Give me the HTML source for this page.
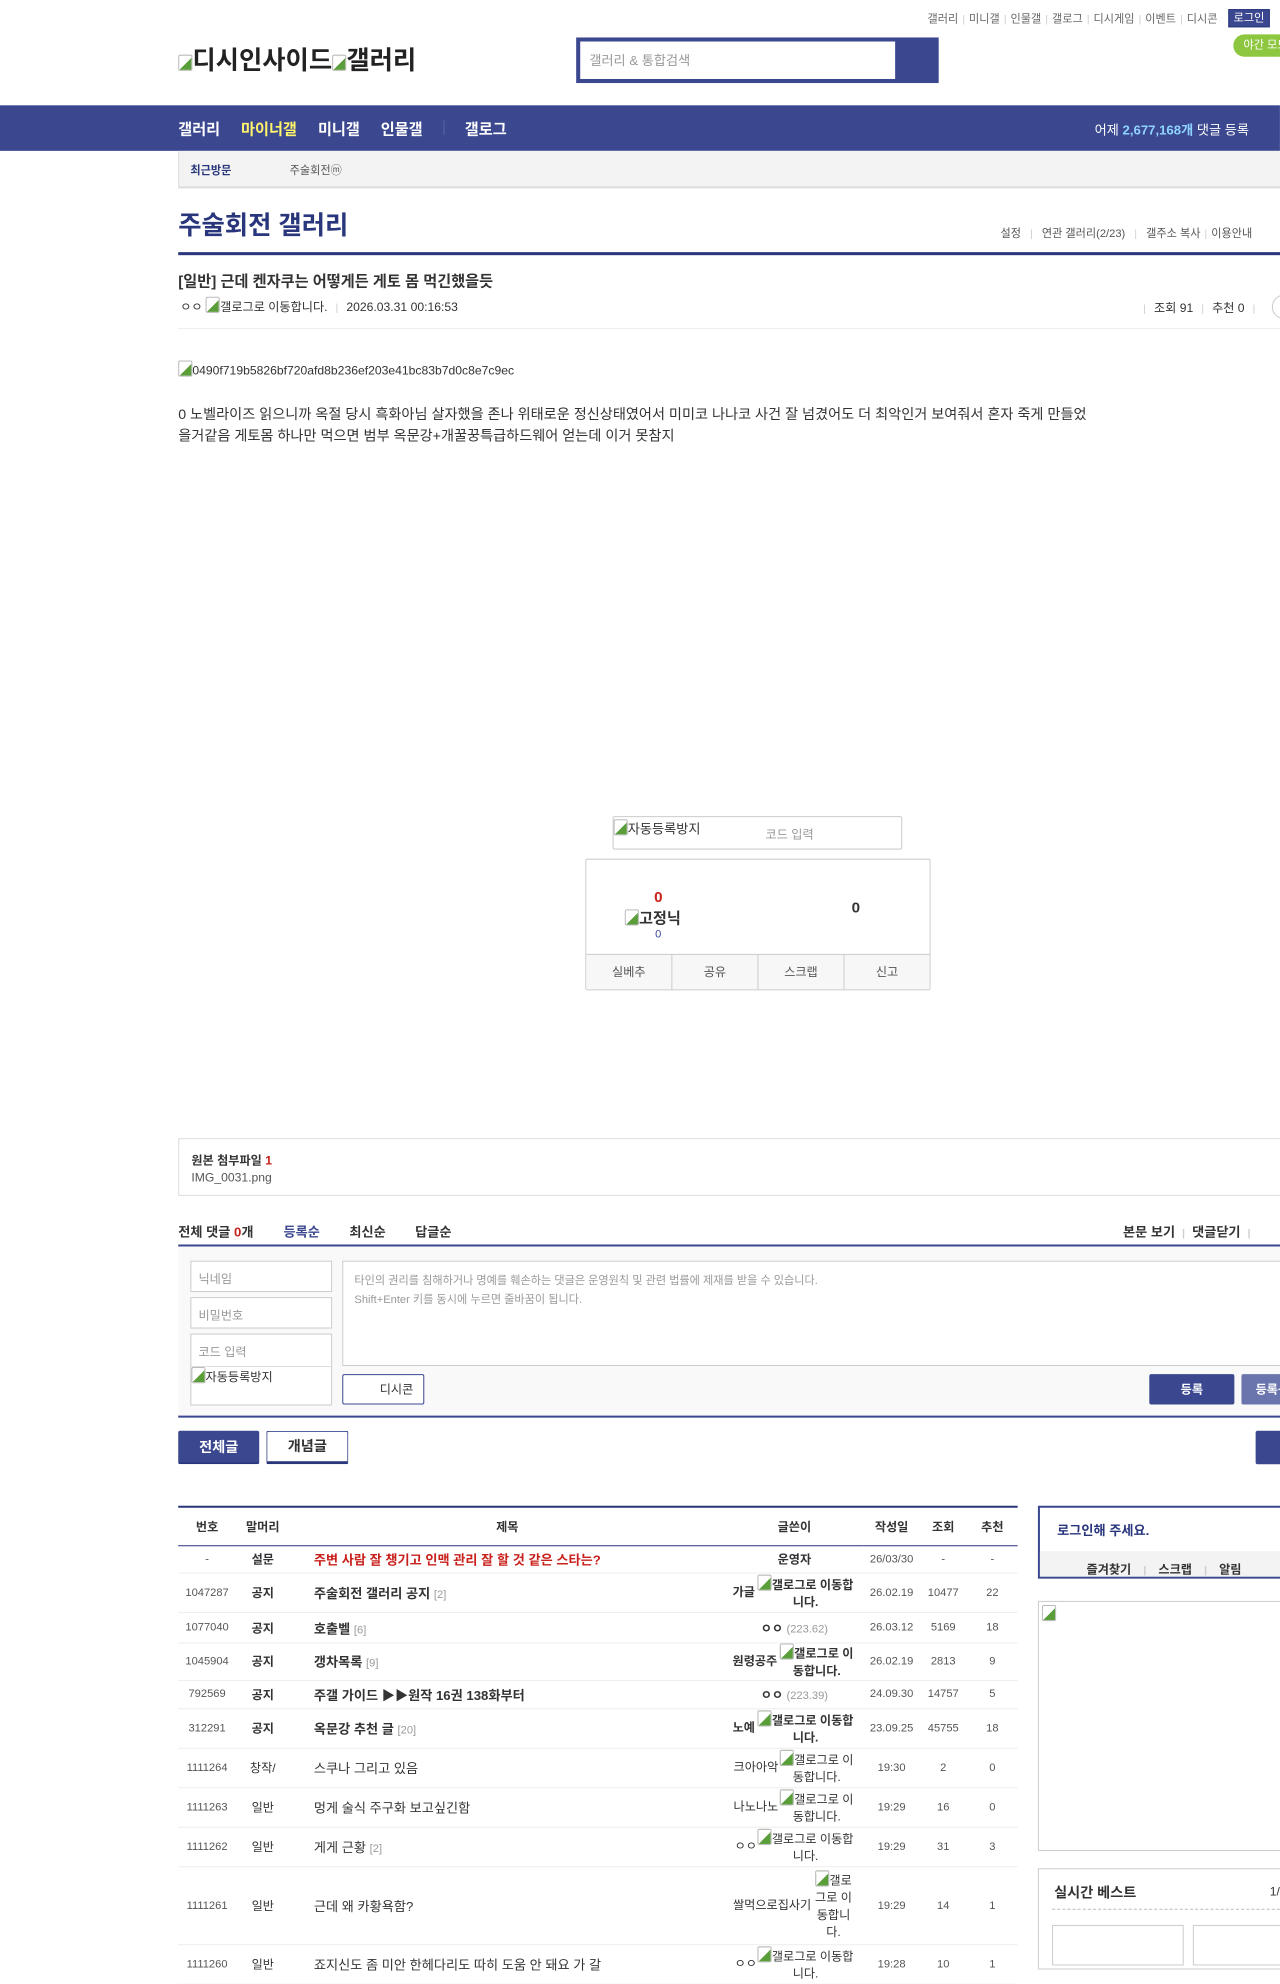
<!DOCTYPE html>
<html><head><meta charset="utf-8">
<style>
*{margin:0;padding:0;box-sizing:border-box}
body{width:1280px;height:1957px;overflow:hidden;background:#fff;font-family:"Liberation Sans","Noto Sans CJK KR",sans-serif;color:#333;font-size:13px}
#w{position:relative;width:1264px;height:1933px;transform:scale(1.0126);transform-origin:0 0}
.a{position:absolute;white-space:nowrap}
.bi{display:inline-block;width:14px;height:16px;border:1px solid #bbb;border-radius:2px;vertical-align:-2px;background:linear-gradient(135deg,#fff 55%,#5a9e3a 55%)}
.sep{color:#ccc;margin:0 4px;font-size:10px}
.nav{color:#fff;font-size:15px;font-weight:bold}
table{border-collapse:collapse;width:829px;font-size:12px;table-layout:fixed}
td{border-bottom:1px solid #eee;text-align:center;color:#333}
td.t{text-align:left;padding-left:24px;font-size:13px;white-space:nowrap;overflow:hidden}
td.n{font-size:11px;color:#555}
td.w{white-space:normal}
.g{display:inline-block;width:100px;white-space:normal;line-height:17px;vertical-align:middle;text-align:center}
.cm{color:#999;font-size:11px}
</style></head><body><div id="w">

<div class="a" style="left:916px;top:10px;font-size:11px;color:#666">갤러리<span class="sep">|</span>미니갤<span class="sep">|</span>인물갤<span class="sep">|</span>갤로그<span class="sep">|</span>디시게임<span class="sep">|</span>이벤트<span class="sep">|</span>디시콘</div>
<div class="a" style="left:1213px;top:9px;width:41px;height:18px;background:#3b4890;border:1px solid #29367c;color:#fff;font-size:11px;text-align:center;line-height:16px">로그인</div>
<div class="a" style="left:1218px;top:34px;width:60px;height:22px;background:#8dc63f;border-radius:11px;color:#fff;font-size:11px;line-height:22px;padding-left:10px">야간 모드</div>

<div class="a" style="left:176px;top:40px;font-size:25px;font-weight:bold;color:#222"><span class="bi"></span>디시인사이드<span class="bi"></span>갤러리</div>

<div class="a" style="left:569px;top:37px;width:358px;height:45px;background:#3b4890"></div>
<div class="a" style="left:573px;top:41px;width:311px;height:37px;background:#fff;color:#999;font-size:13px;line-height:37px;padding-left:9px">갤러리 &amp; 통합검색</div>

<div class="a" style="left:0;top:104px;width:1264px;height:45px;background:#3b4890"></div>
<div class="a nav" style="left:176px;top:117px">갤러리</div>
<div class="a nav" style="left:238px;top:117px;color:#fff46a">마이너갤</div>
<div class="a nav" style="left:314px;top:117px">미니갤</div>
<div class="a nav" style="left:376px;top:117px">인물갤</div>
<div class="a" style="left:438px;top:119px;width:1px;height:14px;background:#5b67a5"></div>
<div class="a nav" style="left:459px;top:117px">갤로그</div>
<div class="a" style="left:1081px;top:118px;color:#fff;font-size:13px">어제 <b style="color:#8fd3ff">2,677,168개</b> 댓글 등록</div>

<div class="a" style="left:176px;top:149px;width:1090px;height:37px;background:#f3f3f3;border-bottom:2px solid #ddd;border-left:1px solid #ddd"></div>
<div class="a" style="left:188px;top:160px;font-size:11px;font-weight:bold;color:#29367c">최근방문</div>
<div class="a" style="left:286px;top:160px;font-size:11px;color:#555">주술회전ⓜ</div>

<div class="a" style="left:176px;top:203px;font-size:25px;font-weight:bold;color:#29367c">주술회전 갤러리</div>
<div class="a" style="left:988px;top:222px;font-size:11px;color:#555">설정<span class="sep" style="margin:0 9px">|</span>연관 갤러리(2/23)<span class="sep" style="margin:0 9px">|</span>갤주소 복사<span class="sep">|</span>이용안내</div>
<div class="a" style="left:176px;top:249px;width:1090px;height:3px;background:#29367c"></div>

<div class="a" style="left:176px;top:267px;font-size:15px;font-weight:bold;color:#333">[일반] 근데 켄자쿠는 어떻게든 게토 몸 먹긴했을듯</div>
<div class="a" style="left:178px;top:293px;font-size:12px;color:#333">ㅇㅇ <span class="bi"></span>갤로그로 이동합니다.<span class="sep" style="margin:0 8px">|</span>2026.03.31 00:16:53</div>
<div class="a" style="left:1121px;top:295px;font-size:12px;color:#333"><span class="sep" style="margin:0 8px">|</span>조회 91<span class="sep" style="margin:0 8px">|</span>추천 0<span class="sep" style="margin:0 8px">|</span></div>
<div class="a" style="left:1256px;top:291px;width:24px;height:24px;border:1px solid #ccc;border-radius:12px"></div>
<div class="a" style="left:176px;top:324px;width:1090px;height:1px;background:#eee"></div>

<div class="a" style="left:176px;top:356px;font-size:12px;color:#333"><span class="bi"></span>0490f719b5826bf720afd8b236ef203e41bc83b7d0c8e7c9ec</div>
<div class="a" style="left:176px;top:399px;font-size:14px;line-height:21px;color:#333">0 노벨라이즈 읽으니까 옥절 당시 흑화아님 살자했을 존나 위태로운 정신상태였어서 미미코 나나코 사건 잘 넘겼어도 더 최악인거 보여줘서 혼자 죽게 만들었<br>을거같음 게토몸 하나만 먹으면 범부 옥문강+개꿀꿍특급하드웨어 얻는데 이거 못참지</div>

<div class="a" style="left:605px;top:806px;width:286px;height:33px;border:1px solid #ccc;border-radius:2px"></div>
<div class="a" style="left:606px;top:808px;font-size:13px;color:#333"><span class="bi"></span>자동등록방지</div>
<div class="a" style="left:756px;top:815px;font-size:12px;color:#999">코드 입력</div>

<div class="a" style="left:578px;top:848px;width:341px;height:130px;border:1px solid #ccc;border-radius:2px"></div>
<div class="a" style="left:646px;top:878px;font-size:15px;font-weight:bold;color:#c8201b">0</div>
<div class="a" style="left:617px;top:896px;font-size:15px;font-weight:bold;color:#333"><span class="bi"></span>고정닉</div>
<div class="a" style="left:647px;top:917px;font-size:11px;color:#3b4890">0</div>
<div class="a" style="left:841px;top:888px;font-size:15px;font-weight:bold;color:#333">0</div>
<div class="a" style="left:579px;top:942px;width:339px;height:35px;border-top:1px solid #ccc;background:#f7f7f7;display:flex;font-size:12px;color:#555">
<div style="flex:1;border-right:1px solid #ccc;text-align:center;line-height:34px">실베추</div>
<div style="flex:1;border-right:1px solid #ccc;text-align:center;line-height:34px">공유</div>
<div style="flex:1;border-right:1px solid #ccc;text-align:center;line-height:34px">스크랩</div>
<div style="flex:1;text-align:center;line-height:34px">신고</div></div>

<div class="a" style="left:176px;top:1124px;width:1090px;height:57px;border:1px solid #ddd"></div>
<div class="a" style="left:189px;top:1137px;font-size:12px;font-weight:bold;color:#333">원본 첨부파일 <span style="color:#c8201b">1</span></div>
<div class="a" style="left:189px;top:1156px;font-size:12px;color:#555">IMG_0031.png</div>

<div class="a" style="left:176px;top:1206px;font-size:13px;font-weight:bold;color:#333">전체 댓글 <span style="color:#c8201b">0</span>개</div>
<div class="a" style="left:280px;top:1206px;font-size:13px;font-weight:bold;color:#3b4890">등록순</div>
<div class="a" style="left:345px;top:1206px;font-size:13px;font-weight:bold;color:#333">최신순</div>
<div class="a" style="left:410px;top:1206px;font-size:13px;font-weight:bold;color:#333">답글순</div>
<div class="a" style="left:1109px;top:1206px;font-size:13px;font-weight:bold;color:#333">본문 보기<span class="sep" style="margin:0 7px">|</span>댓글닫기<span class="sep" style="margin:0 7px">|</span></div>
<div class="a" style="left:176px;top:1229px;width:1090px;height:2px;background:#3b4890"></div>
<div class="a" style="left:176px;top:1231px;width:1090px;height:168px;background:#f9f9f9"></div>
<div class="a" style="left:188px;top:1245px;width:140px;height:31px;border:1px solid #ccc;background:#fff;font-size:12px;color:#999;padding:8px 7px">닉네임</div>
<div class="a" style="left:188px;top:1281px;width:140px;height:31px;border:1px solid #ccc;background:#fff;font-size:12px;color:#999;padding:8px 7px">비밀번호</div>
<div class="a" style="left:188px;top:1317px;width:140px;height:71px;border:1px solid #ccc;background:#fff;font-size:12px;color:#999;padding:8px 7px">코드 입력</div>
<div class="a" style="left:188px;top:1349px;width:140px;height:1px;background:#ddd"></div>
<div class="a" style="left:189px;top:1350px;font-size:12px;color:#333"><span class="bi"></span>자동등록방지</div>
<div class="a" style="left:338px;top:1245px;width:930px;height:104px;border:1px solid #ccc;background:#fff;font-size:11px;color:#999;line-height:19px;padding:10px 11px">타인의 권리를 침해하거나 명예를 훼손하는 댓글은 운영원칙 및 관련 법률에 제재를 받을 수 있습니다.<br>Shift+Enter 키를 동시에 누르면 줄바꿈이 됩니다.</div>
<div class="a" style="left:338px;top:1357px;width:81px;height:30px;border:1px solid #3b4890;border-radius:2px;background:#fff;font-size:12px;color:#333;line-height:28px;padding-left:36px">디시콘</div>
<div class="a" style="left:1135px;top:1357px;width:84px;height:30px;background:#3b4890;border-radius:2px;color:#fff;font-size:12px;font-weight:bold;text-align:center;line-height:30px">등록</div>
<div class="a" style="left:1226px;top:1357px;width:60px;height:30px;background:#6b75ad;border-radius:2px;color:#fff;font-size:12px;font-weight:bold;line-height:30px;padding-left:14px">등록+추천</div>
<div class="a" style="left:176px;top:1398px;width:1090px;height:2px;background:#3b4890"></div>

<div class="a" style="left:176px;top:1413px;width:80px;height:33px;background:#3b4890;border-bottom:2px solid #29367c;border-radius:2px;color:#fff;font-size:14px;font-weight:bold;text-align:center;line-height:32px">전체글</div>
<div class="a" style="left:263px;top:1413px;width:81px;height:33px;border:1px solid #3b4890;border-bottom:3px solid #29367c;border-radius:2px;color:#333;font-size:14px;font-weight:bold;text-align:center;line-height:29px">개념글</div>
<div class="a" style="left:1240px;top:1413px;width:60px;height:33px;background:#3b4890;border-radius:2px"></div>

<div class="a" style="left:176px;top:1487px;width:829px;height:2px;background:#29367c"></div>
<div class="a" style="left:176px;top:1489px">
<table>
<colgroup><col style="width:57px"><col style="width:53px"><col style="width:430px"><col style="width:137px"><col style="width:55px"><col style="width:47px"><col style="width:50px"></colgroup>
<tr style="height:37px"><td style="font-weight:bold;border-bottom:1px solid #29367c">번호</td><td style="font-weight:bold;border-bottom:1px solid #29367c">말머리</td><td style="font-weight:bold;border-bottom:1px solid #29367c">제목</td><td style="font-weight:bold;border-bottom:1px solid #29367c">글쓴이</td><td style="font-weight:bold;border-bottom:1px solid #29367c">작성일</td><td style="font-weight:bold;border-bottom:1px solid #29367c">조회</td><td style="font-weight:bold;border-bottom:1px solid #29367c">추천</td></tr>
<tr style="height:27px"><td class="n">-</td><td><b>설문</b></td><td class="t"><b style="color:#c8201b">주변 사람 잘 챙기고 인맥 관리 잘 할 것 같은 스타는?</b></td><td><b>운영자</b></td><td class="n">26/03/30</td><td class="n">-</td><td class="n">-</td></tr>
<tr style="height:39px"><td class="n">1047287</td><td><b>공지</b></td><td class="t"><b>주술회전 갤러리 공지</b> <span class="cm">[2]</span></td><td class="w"><b>가글</b><b class="g"><span class="bi"></span>갤로그로 이동합니다.</b></td><td class="n">26.02.19</td><td class="n">10477</td><td class="n">22</td></tr>
<tr style="height:30px"><td class="n">1077040</td><td><b>공지</b></td><td class="t"><b>호출벨</b> <span class="cm">[6]</span></td><td><b>ㅇㅇ</b> <span class="cm">(223.62)</span></td><td class="n">26.03.12</td><td class="n">5169</td><td class="n">18</td></tr>
<tr style="height:37px"><td class="n">1045904</td><td><b>공지</b></td><td class="t"><b>갱차목록</b> <span class="cm">[9]</span></td><td class="w"><b>원령공주</b><b class="g" style="width:78px"><span class="bi"></span>갤로그로 이동합니다.</b></td><td class="n">26.02.19</td><td class="n">2813</td><td class="n">9</td></tr>
<tr style="height:28px"><td class="n">792569</td><td><b>공지</b></td><td class="t"><b>주갤 가이드 ▶▶원작 16권 138화부터</b></td><td><b>ㅇㅇ</b> <span class="cm">(223.39)</span></td><td class="n">24.09.30</td><td class="n">14757</td><td class="n">5</td></tr>
<tr style="height:39px"><td class="n">312291</td><td><b>공지</b></td><td class="t"><b>옥문강 추천 글</b> <span class="cm">[20]</span></td><td class="w"><b>노예</b><b class="g"><span class="bi"></span>갤로그로 이동합니다.</b></td><td class="n">23.09.25</td><td class="n">45755</td><td class="n">18</td></tr>
<tr style="height:39px"><td class="n">1111264</td><td>창작/</td><td class="t">스쿠나 그리고 있음</td><td class="w">크아아악<span class="g" style="width:76px"><span class="bi"></span>갤로그로 이동합니다.</span></td><td class="n">19:30</td><td class="n">2</td><td class="n">0</td></tr>
<tr style="height:39px"><td class="n">1111263</td><td>일반</td><td class="t">멍게 술식 주구화 보고싶긴함</td><td class="w">나노나노<span class="g" style="width:76px"><span class="bi"></span>갤로그로 이동합니다.</span></td><td class="n">19:29</td><td class="n">16</td><td class="n">0</td></tr>
<tr style="height:39px"><td class="n">1111262</td><td>일반</td><td class="t">게게 근황 <span class="cm">[2]</span></td><td class="w">ㅇㅇ<span class="g" style="width:96px"><span class="bi"></span>갤로그로 이동합니다.</span></td><td class="n">19:29</td><td class="n">31</td><td class="n">3</td></tr>
<tr style="height:77px"><td class="n">1111261</td><td>일반</td><td class="t">근데 왜 카황욕함?</td><td class="w">쌀먹으로집사기<span class="g" style="width:44px"><span class="bi"></span>갤로그로 이동합니다.</span></td><td class="n">19:29</td><td class="n">14</td><td class="n">1</td></tr>
<tr style="height:39px"><td class="n">1111260</td><td>일반</td><td class="t">죠지신도 좀 미안 한헤다리도 따히 도움 안 돼요 가 갈</td><td class="w">ㅇㅇ<span class="g" style="width:96px"><span class="bi"></span>갤로그로 이동합니다.</span></td><td class="n">19:28</td><td class="n">10</td><td class="n">1</td></tr>
</table></div>

<div class="a" style="left:1025px;top:1487px;width:250px;height:72px;border:2px solid #3b4890"></div>
<div class="a" style="left:1027px;top:1532px;width:248px;height:25px;background:#f3f3f3"></div>
<div class="a" style="left:1044px;top:1501px;font-size:13px;font-weight:bold;color:#29367c">로그인해 주세요.</div>
<div class="a" style="left:1073px;top:1541px;font-size:12px;font-weight:bold;color:#333">즐겨찾기<span class="sep" style="margin:0 12px">|</span>스크랩<span class="sep" style="margin:0 12px">|</span>알림</div>
<div class="a" style="left:1025px;top:1581px;width:250px;height:247px;border:1px solid #ccc"><span class="bi" style="margin:3px"></span></div>
<div class="a" style="left:1025px;top:1845px;width:250px;height:100px;border:1px solid #ccc"></div>
<div class="a" style="left:1041px;top:1859px;font-size:14px;font-weight:bold;color:#333">실시간 베스트</div>
<div class="a" style="left:1254px;top:1861px;font-size:12px;color:#333">1/</div>
<div class="a" style="left:1039px;top:1885px;width:230px;border-top:1px dashed #bbb"></div>
<div class="a" style="left:1039px;top:1901px;width:130px;height:40px;border:1px solid #ccc"></div>
<div class="a" style="left:1178px;top:1901px;width:100px;height:40px;border:1px solid #ccc"></div>
</div></body></html>
